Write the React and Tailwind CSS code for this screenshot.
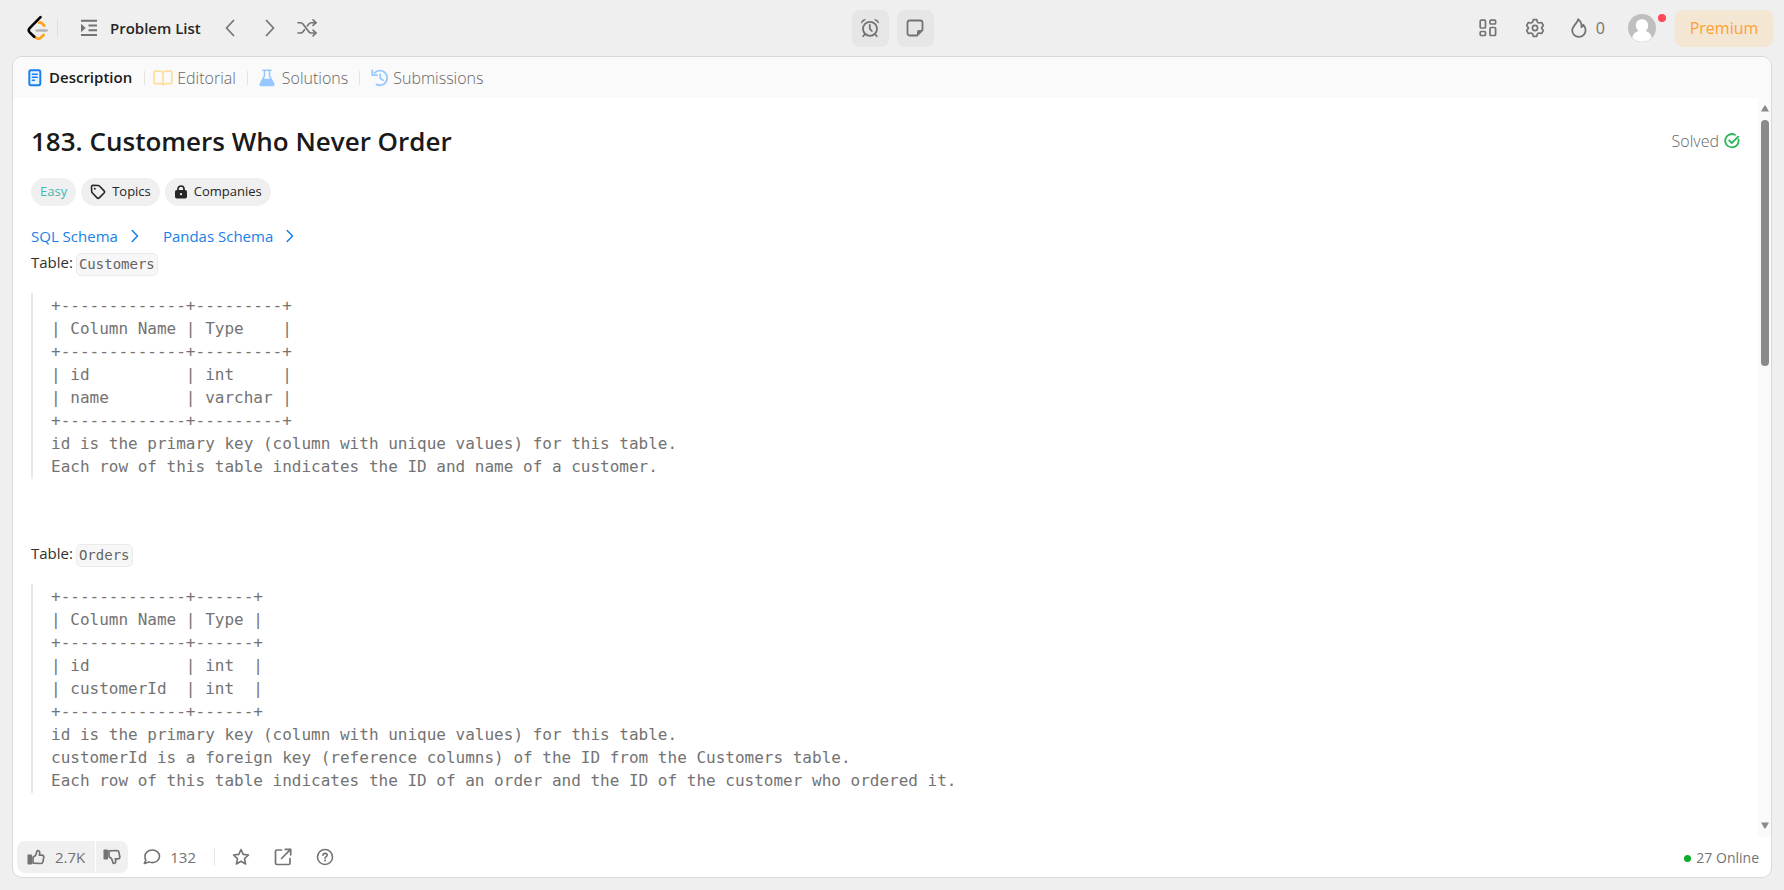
import React from "react";

const Svg = ({ className, children, w = 20, h = 20, sw = 1.7 }) => (
  <svg
    className={className}
    width={w}
    height={h}
    viewBox={`0 0 ${w} ${h}`}
    fill="none"
    stroke="currentColor"
    strokeWidth={sw}
    strokeLinecap="round"
    strokeLinejoin="round"
    aria-hidden="true"
  >
    {children}
  </svg>
);

const Logo = () => (
  <Svg w={22} h={26} sw={2.6}>
    <path d="m12 7.700c1.200-.4 2-.2 2.800.5l2.600 2.500" stroke="#ffa116" />
    <path d="M7.200 21.300l1.300 1.300c1.600 1.300 3.900 1.300 5.300 0l2.800-2.600" stroke="#ffa116" />
    <path d="M9.500 15.500h10.200" stroke="#b3b3b3" strokeWidth="2.300" />
    <path d="M13.500 2.200 2.700 13.200c-1.100 1.200-1.100 3 0 4.200l4.500 4.400" stroke="#000" />
  </Svg>
);

const ListIcon = () => (
  <Svg w={18} h={18} sw={2}>
    <path d="M1 1.800h16M8.500 6.500H17M8.500 11.200H17M1 16h16" strokeLinecap="butt" />
    <path d="M1 4.800v8.400l4.700-4.200z" fill="currentColor" stroke="none" />
  </Svg>
);

const ChevronL = () => (
  <Svg w={10} h={18}><path d="M8.500 1.500 1.500 9l7 7.500" /></Svg>
);
const ChevronR = () => (
  <Svg w={10} h={18}><path d="m1.500 1.500 7 7.500-7 7.500" /></Svg>
);
const LinkChevron = () => (
  <Svg w={8} h={14} sw={1.5}><path d="m1.200 1.500 5.300 5.500-5.300 5.500" /></Svg>
);

const ShuffleIcon = () => (
  <Svg w={20} h={18} sw={1.6}>
    <path d="M1 3.700h2.500c1 0 1.900.500 2.500 1.300l5.800 7.700c.6.800 1.500 1.300 2.500 1.300H19" />
    <path d="M1 14h2.500c1 0 1.900-.5 2.500-1.300l1.500-2M10.300 7l1.500-2c.6-.8 1.500-1.300 2.500-1.300H19" />
    <path d="m16 .9 3 2.800-3 2.800M16 11.200l3 2.800-3 2.800" />
  </Svg>
);

const AlarmIcon = () => (
  <Svg w={20} h={20} sw={1.8}>
    <circle cx="10" cy="10.800" r="7" />
    <path d="M9.800 6.800v4l2 2.200M5.200 16l-2 2.200M14.800 16l2 2.200" />
    <path d="M1 5.800C.8 3 3 .9 6.200 1.300zM19 5.800c.2-2.800-2-4.900-5.200-4.500z" fill="currentColor" stroke="none" />
  </Svg>
);

const NoteIcon = () => (
  <Svg w={18} h={18} sw={1.8}>
    <path d="M11 16.500H3.700A2.200 2.200 0 0 1 1.500 14.300V3.700c0-1.200 1-2.200 2.200-2.200h10.600c1.200 0 2.200 1 2.200 2.200V11z" />
    <path d="M11 16.500V13c0-1.100.9-2 2-2h3.500z" fill="currentColor" stroke="none" />
  </Svg>
);

const GridIcon = () => (
  <Svg w={18} h={18} sw={1.7}>
    <rect x="1.200" y="1.200" width="5.300" height="7.800" rx="1" />
    <rect x="11" y="1.200" width="5.600" height="3.800" rx="1" />
    <rect x="1.200" y="12.500" width="5.300" height="4" rx="1" />
    <rect x="11" y="8.500" width="5.600" height="8" rx="1" />
  </Svg>
);

const GearIcon = () => (
  <Svg w={20} h={20} sw={1.7}>
    <path d="M8.300 1.700h3.400l.8 2.500 1.500.8 2.600-.5 1.700 2.900L16.500 10l1.800 2.600-1.700 2.900-2.600-.5-1.500.8-.8 2.500H8.300l-.8-2.500L6 15l-2.600.5-1.700-2.900L3.500 10 1.700 7.400l1.700-2.900L6 5l1.500-.8z" />
    <circle cx="10" cy="10" r="2.600" />
  </Svg>
);

const FlameIcon = () => (
  <Svg w={18} h={20} sw={1.8}>
    <path d="M8 1.200c.5 3.200-5.800 6.400-5.800 11.300A6.500 6.500 0 0 0 9 18.800c3.900 0 6.600-2.900 6.600-6.500 0-2.200-.9-4-2.200-5.500-.3 1.200-1 2-1.900 2.400.2-3.500-1-6.400-3.500-8z" />
  </Svg>
);

const DocIcon = () => (
  <Svg w={14} h={18} sw={2}>
    <rect x="1.300" y="1.300" width="11" height="15" rx="1.700" className="fill-[#e6f2ff]" />
    <path d="M4.300 5.300h5M4.300 8.200h5M4.300 11.200h2.200" strokeWidth="1.400" />
  </Svg>
);

const BookIcon = () => (
  <Svg w={20} h={16} sw={1.700}>
    <path d="M10 2.500C9 1.600 8 1.200 6.800 1.200H2.200c-.6 0-1 .4-1 1v10.400c0 .6.400 1 1 1h4.900c1.200 0 2.200.4 2.900 1.200.7-.8 1.700-1.200 2.900-1.200h4.900c.6 0 1-.4 1-1V2.200c0-.6-.4-1-1-1h-4.600C12 1.200 11 1.600 10 2.500zV14.500" />
  </Svg>
);

const FlaskIcon = () => (
  <Svg w={16} h={18} sw={1.600}>
    <path d="M4 1.200h8M5.500 1.200v5.600L1.500 14.500c-.6 1.200.1 2 1.200 2h10.600c1.100 0 1.800-.8 1.200-2L10.500 6.800V1.200" />
    <path d="M4 9.800h8l2.700 5c.4.900 0 1.700-1 1.700H2.300c-1 0-1.400-.8-1-1.700z" fill="currentColor" stroke="none" />
  </Svg>
);

const HistoryIcon = () => (
  <Svg w={18} h={18} sw={1.800}>
    <path d="M3.700 3.800A7.300 7.300 0 1 1 5.500 15.400M1.300 1.500v4.700h4.700M9.300 5.300v4l2.700 1.900" />
  </Svg>
);

const CheckIcon = () => (
  <Svg w={16} h={16} sw={1.800} className="text-[#2db55d]">
    <path d="M11 1.800A6.700 6.700 0 1 0 14.500 6.500" />
    <path d="m5.200 7.500 2.500 2.500 6.500-6.400" />
  </Svg>
);

const TagIcon = () => (
  <Svg w={16} h={16} sw={1.600}>
    <path d="M1.500 2.800c0-.8.600-1.400 1.400-1.400l5.300.1c.5 0 .9.200 1.200.5l4.700 4.900c.6.600.6 1.500 0 2.100l-4.900 4.900c-.6.600-1.500.6-2.100 0L2.200 8.800c-.3-.3-.5-.7-.5-1.200z" />
    <circle cx="4.800" cy="4.700" r="1" fill="currentColor" stroke="none" />
  </Svg>
);

const LockIcon = () => (
  <Svg w={14} h={14} sw={1.700}>
    <path d="M4 6V4a3 3 0 0 1 6 0v2" />
    <rect x="1" y="5" width="12" height="8.500" rx="1.800" fill="currentColor" stroke="none" />
    <circle cx="7" cy="9.200" r="1.100" fill="#f0f0f0" stroke="none" />
  </Svg>
);

const ThumbUp = () => (
  <Svg w={18} h={18} sw={1.700}>
    <rect x="0.500" y="6.500" width="4.500" height="10" rx="0.800" fill="currentColor" stroke="none" />
    <path d="M6 9.200 8.500 7.500 10.300 2.600c1.600-.4 2.600.8 2.400 2.400l-.4 2.200h2.600c1.300 0 2.100 1 1.900 2.200l-.9 4.400c-.2 1-1 1.700-2 1.700L6 15.200z" />
  </Svg>
);

const ThumbDown = () => (
  <Svg w={18} h={18} sw={1.700}>
    <rect x="0.500" y="1.500" width="4.500" height="10" rx="0.800" fill="currentColor" stroke="none" />
    <path d="M6 8.800 8.500 10.500 10.300 15.400c1.600.4 2.600-.8 2.400-2.400l-.4-2.200h2.600c1.300 0 2.100-1 1.900-2.200l-.9-4.400c-.2-1-1-1.700-2-1.700L6 2.800z" />
  </Svg>
);

const CommentIcon = () => (
  <Svg w={18} h={18} sw={1.600}>
    <path d="M9.300 2c4.200 0 7.200 2.800 7.200 6.300s-3 6.300-7.200 6.300c-1.200 0-2.400-.2-3.400-.7L1.300 15.500l1.600-3.400a5.700 5.700 0 0 1-.9-3.800C2 4.800 5.100 2 9.300 2z" />
  </Svg>
);

const StarIcon = () => (
  <Svg w={18} h={18} sw={1.600}>
    <path d="m9 1.500 2.200 4.900 5.300.6-4 3.600 1.100 5.400L9 13.300 4.400 16l1.100-5.400-4-3.600 5.300-.6z" />
  </Svg>
);

const ShareIcon = () => (
  <Svg w={18} h={18} sw={1.700}>
    <path d="M7.500 2H2.900c-.8 0-1.400.6-1.400 1.400v11.700c0 .8.600 1.400 1.400 1.400h11.700c.8 0 1.400-.6 1.400-1.400v-4.600M11.200 1.300h5.500v5.500M16.300 1.700 7.500 10.500" />
  </Svg>
);

const HelpIcon = () => (
  <Svg w={18} h={18} sw={1.600}>
    <circle cx="9" cy="9" r="7.500" />
    <path d="M6.900 7.300c.1-1.200 1-1.900 2.200-1.900 1.200 0 2.100.8 2.100 1.800 0 1.500-2.100 1.500-2.100 3" />
    <circle cx="9.100" cy="12.500" r="1" fill="currentColor" stroke="none" />
  </Svg>
);

const Avatar = () => (
  <svg width="28" height="28" viewBox="0 0 28 28" aria-hidden="true">
    <circle cx="14" cy="14" r="14" fill="#bfbfbf" />
    <path d="M14 5.200c3.600 0 6.200 2.600 6.200 6.200 0 2.300-1 4.200-2.600 5.500 3.200.9 5.400 3 6.100 6.900a14 14 0 0 1-19.400 0c.7-3.900 2.900-6 6.100-6.900a6.900 6.900 0 0 1-2.600-5.500c0-3.600 2.600-6.200 6.200-6.200z" fill="#fff" />
  </svg>
);

const customers = `+-------------+---------+
| Column Name | Type    |
+-------------+---------+
| id          | int     |
| name        | varchar |
+-------------+---------+
id is the primary key (column with unique values) for this table.
Each row of this table indicates the ID and name of a customer.`;

const orders = `+-------------+------+
| Column Name | Type |
+-------------+------+
| id          | int  |
| customerId  | int  |
+-------------+------+
id is the primary key (column with unique values) for this table.
customerId is a foreign key (reference columns) of the ID from the Customers table.
Each row of this table indicates the ID of an order and the ID of the customer who ordered it.`;

const Schema = ({ children }) => (
  <pre className="border-l-2 border-[#e8e8e8] py-px pl-[18px] font-['DejaVu_Sans_Mono',monospace] text-base leading-[23px] text-[#737373]">
    {children}
  </pre>
);

const TableLabel = ({ name }) => (
  <p className="flex h-6 items-center gap-[3px] text-[15px] text-[#303030]">
    Table:
    <code className="mt-1 flex h-[23px] items-center rounded-[5px] border border-[#ebebeb] bg-[#f7f7f7] px-[2px] font-['DejaVu_Sans_Mono',monospace] text-sm text-[#636363]">
      {name}
    </code>
  </p>
);

const Divider = () => <span className="h-[14px] w-px bg-[#e4e4e4]" />;

export default function App() {
  return (
    <div className="flex h-screen flex-col bg-[#efefef] px-3 pb-3 font-['Open_Sans',sans-serif] text-[#737373]">
      <header className="-mr-px flex h-14 shrink-0 items-center justify-between">
        <div className="flex flex-1 items-center">
          <a href="#home" aria-label="Home" className="ml-[15px]"><Logo /></a>
          <span className="ml-2 h-[18px] w-px bg-[#e0e0e0]" />
          <button className="ml-[22px] flex items-center gap-3 text-[15px] font-semibold text-[#262626]">
            <span className="text-[#737373]"><ListIcon /></span>
            Problem List
          </button>
          <button aria-label="Previous problem" className="ml-6"><ChevronL /></button>
          <button aria-label="Next problem" className="ml-[30px]"><ChevronR /></button>
          <button aria-label="Random problem" className="ml-[22px]"><ShuffleIcon /></button>
        </div>
        <div className="flex gap-2">
          <button aria-label="Timer" className="flex size-[37px] items-center justify-center rounded-lg bg-[#e6e6e6]"><AlarmIcon /></button>
          <button aria-label="Notes" className="flex size-[37px] items-center justify-center rounded-lg bg-[#e6e6e6]"><NoteIcon /></button>
        </div>
        <div className="flex flex-1 items-center justify-end">
          <button aria-label="Layout"><GridIcon /></button>
          <button aria-label="Settings" className="ml-7"><GearIcon /></button>
          <button className="ml-[25px] flex items-center gap-2 text-base"><FlameIcon />0</button>
          <button aria-label="Profile" className="relative ml-[23px]">
            <Avatar />
            <span className="absolute -right-[10px] top-0 size-2 rounded-full bg-[#ff4757]" />
          </button>
          <button className="ml-[19px] flex h-[37px] w-[98px] items-center justify-center rounded-lg bg-[#f3e6d3] text-base text-[#ffa033]">
            Premium
          </button>
        </div>
      </header>

      <main className="flex min-h-0 flex-1 flex-col overflow-hidden rounded-[10px] border border-[#dadada] bg-white">
        <nav className="flex h-[41px] shrink-0 items-center bg-[#fafafa] pl-[15px] text-[15px]">
          <a href="#description" className="flex items-center gap-[7px] font-semibold text-[#1a1a1a]">
            <span className="text-[#1a80f0]"><DocIcon /></span>Description
          </a>
          <span className="ml-3" /><Divider />
          <a href="#editorial" className="ml-2 flex items-center gap-1 text-base font-light text-[#666666]">
            <span className="text-[#fbdf9d]"><BookIcon /></span>Editorial
          </a>
          <span className="ml-[11px]" /><Divider />
          <a href="#solutions" className="ml-[11px] flex items-center gap-[7px] text-base font-light text-[#666666]">
            <span className="text-[#97c7ff]"><FlaskIcon /></span>Solutions
          </a>
          <span className="ml-[11px]" /><Divider />
          <a href="#submissions" className="ml-[11px] flex items-center gap-1 text-base font-light text-[#666666]">
            <span className="text-[#97c7ff]"><HistoryIcon /></span>Submissions
          </a>
        </nav>

        <div className="flex min-h-0 flex-1">
          <article className="min-w-0 flex-1 overflow-hidden pl-[18px] pr-[18px] pt-[25px]">
            <div className="flex items-center justify-between">
              <h1 className="text-[26px] font-semibold leading-9 text-[#1a1a1a]">183. Customers Who Never Order</h1>
              <span className="flex items-center gap-[5px] text-base font-light text-[#666666]">Solved <CheckIcon /></span>
            </div>
            <div className="mt-[19px] flex gap-[5px] text-[13px] text-[#262626]">
              <span className="flex h-7 items-center rounded-full bg-[#f0f0f0] px-[9px] text-[#46b8b0]">Easy</span>
              <button className="flex h-7 items-center gap-1.5 rounded-full bg-[#f0f0f0] px-[9px]"><TagIcon />Topics</button>
              <button className="flex h-7 items-center gap-1.5 rounded-full bg-[#f0f0f0] px-[9px]"><LockIcon />Companies</button>
            </div>
            <div className="mt-[18px] flex h-6 items-center gap-6 text-[15px] text-[#1a80e6]">
              <a href="#sql" className="flex items-center gap-[13px]">SQL Schema <LinkChevron /></a>
              <a href="#pandas" className="flex items-center gap-[13px]">Pandas Schema <LinkChevron /></a>
            </div>
            <div className="mt-[2px]"><TableLabel name="Customers" /></div>
            <div className="mt-[19px]"><Schema>{customers}</Schema></div>
            <div className="mt-[62px]"><TableLabel name="Orders" /></div>
            <div className="mt-[19px]"><Schema>{orders}</Schema></div>
          </article>
          <div className="flex w-[13px] shrink-0 flex-col items-center bg-[#fafafa] text-[#8a8a8a]" aria-hidden="true">
            <svg className="mt-[7px] shrink-0" width="8" height="7"><path d="M3.500.5h1L8 6.500H0z" fill="currentColor" /></svg>
            <span className="mt-2 h-1/3 w-2 rounded-full bg-[#8a8a8a]" />
            <svg className="mb-2 mt-auto shrink-0" width="8" height="7"><path d="M3.500 6.500h1L8 .5H0z" fill="currentColor" /></svg>
          </div>
        </div>

        <footer className="flex h-10 shrink-0 items-start justify-between pl-1 pr-3 pt-1">
          <div className="flex h-8 items-center">
            <div className="flex h-8 gap-px overflow-hidden rounded-lg text-[15px]">
              <button className="flex items-center gap-[10px] bg-[#f0f0f0] px-[10px]"><ThumbUp />2.7K</button>
              <button aria-label="Dislike" className="flex items-center bg-[#f0f0f0] px-[7px]"><ThumbDown /></button>
            </div>
            <button className="ml-[15px] flex items-center gap-[9px] text-[15px]"><CommentIcon />132</button>
            <span className="ml-[18px] h-[18px] w-px bg-[#e6e6e6]" />
            <button aria-label="Favorite" className="ml-[17px]"><StarIcon /></button>
            <button aria-label="Share" className="ml-6"><ShareIcon /></button>
            <button aria-label="Help" className="ml-6"><HelpIcon /></button>
          </div>
          <span className="flex h-[34px] items-center gap-[5px] text-sm">
            <span className="size-[7px] rounded-full bg-[#0aad2e]" />27 Online
          </span>
        </footer>
      </main>
    </div>
  );
}
